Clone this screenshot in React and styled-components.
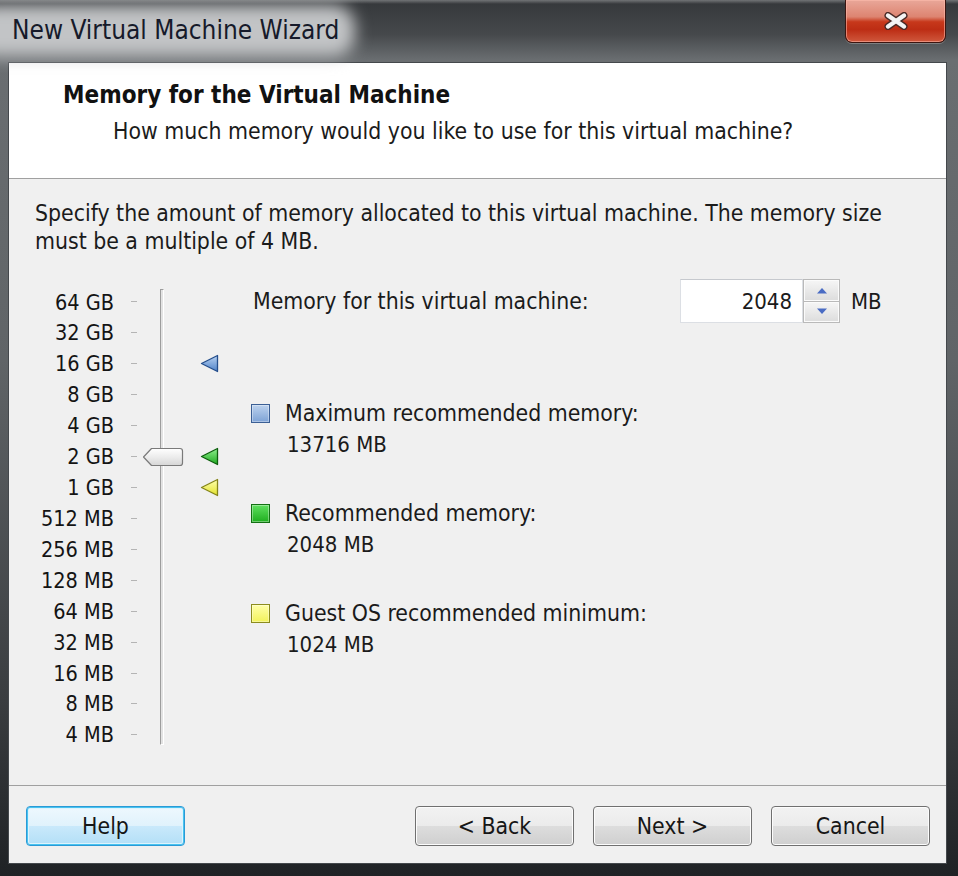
import React from "react";
import styled, { createGlobalStyle } from "styled-components";

const Global = createGlobalStyle`
  html, body { margin: 0; padding: 0; background: #2a2d30; }
  body { width: 958px; height: 876px; overflow: hidden; }
  * { box-sizing: border-box; }
`;

const FONT = `"DejaVu Sans Condensed", "DejaVu Sans", "Liberation Sans", sans-serif`;

const Window = styled.div`
  width: 958px;
  height: 876px;
  display: flex;
  flex-direction: column;
  font-family: ${FONT};
  font-size: 22.8px;
  color: #1b1b1b;
  overflow: hidden;
  background: linear-gradient(
    180deg,
    #34373a 0px,
    #45484b 34px,
    #6a6e71 60px,
    #606467 360px,
    #3a3d40 700px,
    #1f2225 876px
  );
`;

const TitleBar = styled.div`
  height: 62px;
  flex: none;
  display: flex;
  align-items: flex-start;
  justify-content: space-between;
  isolation: isolate;
  background: linear-gradient(180deg, rgba(255,255,255,0.3) 0px, rgba(255,255,255,0) 4px);
`;

const Title = styled.div`
  position: relative;
  font-size: 26px;
  line-height: 28px;
  margin: 16px 0 0 12px;
  color: #161a2a;
  &::before {
    content: "";
    position: absolute;
    inset: -11px -16px -13px -40px;
    background: #c2c4c6;
    border-radius: 22px;
    filter: blur(8px);
    z-index: -1;
  }
`;

const CloseButton = styled.div`
  width: 101px;
  height: 43px;
  margin-right: 12px;
  border: 1px solid #3b1510;
  border-top: none;
  border-radius: 0 0 7px 7px;
  display: flex;
  align-items: center;
  justify-content: center;
  box-shadow: inset 0 0 0 1px rgba(255, 190, 175, 0.55), 0 1px 0 rgba(255,255,255,0.25);
  background: linear-gradient(
    180deg,
    #e9a799 0%,
    #dd8471 40%,
    #c7381b 52%,
    #bd2d14 70%,
    #d0583d 100%
  );
`;

const Client = styled.div`
  flex: 1;
  margin: 0 11px 12px 8px;
  border: 1px solid #44484c;
  background: #f0f0f0;
  display: flex;
  flex-direction: column;
  min-height: 0;
`;

const Header = styled.div`
  height: 116px;
  flex: none;
  background: #ffffff;
  border-bottom: 1px solid #a0a0a0;
  padding: 18px 0 0 54px;
`;

const HeaderTitle = styled.div`
  font-weight: bold;
  font-size: 24px;
  line-height: 28px;
  color: #111;
`;

const HeaderSub = styled.div`
  line-height: 28px;
  margin: 8px 0 0 50px;
`;

const Body = styled.div`
  flex: 1;
  padding: 20px 0 0 26px;
  display: flex;
  flex-direction: column;
`;

const Intro = styled.div`
  line-height: 28px;
  white-space: nowrap;
`;

const Middle = styled.div`
  display: flex;
  margin-top: 24px;
`;

const Scale = styled.div`
  display: grid;
  grid-template-columns: 79px 30px 36px 73px;
  grid-template-rows: repeat(15, 30.93px);
  padding-top: 7.5px;
`;

const ScaleLabel = styled.div`
  grid-column: 1;
  grid-row: ${(p) => p.$row};
  text-align: right;
  font-size: 21.5px;
  line-height: 30.93px;
  padding-top: 1px;
  white-space: nowrap;
  color: #141414;
`;

const Tick = styled.div`
  grid-column: 2;
  grid-row: ${(p) => p.$row};
  align-self: center;
  margin-left: 17px;
  width: 6px;
  height: 1px;
  background: #b4b4b4;
`;

const Track = styled.div`
  grid-column: 3;
  grid-row: 1 / -1;
  justify-self: center;
  width: 4px;
  margin: 2px 0 5px 0;
  border-left: 1px solid #9c9c9c;
  border-top: 1px solid #9c9c9c;
  border-right: 1px solid #ffffff;
  border-bottom: 1px solid #ffffff;
  background: #e2e2e2;
`;

const Thumb = styled.svg`
  grid-column: 3;
  grid-row: ${(p) => p.$row};
  align-self: center;
  justify-self: center;
  margin-left: 1px;
  z-index: 1;
`;

const Marker = styled.svg`
  grid-column: 4;
  grid-row: ${(p) => p.$row};
  align-self: center;
  margin-left: 20px;
`;

const Details = styled.div`
  width: 632px;
  display: flex;
  flex-direction: column;
`;

const SpinRow = styled.div`
  height: 44px;
  display: flex;
  align-items: center;
`;

const SpinLabel = styled.div`
  flex: 1;
`;

const SpinInput = styled.div`
  width: 123px;
  height: 44px;
  background: #ffffff;
  border: 1px solid #dcdfe4;
  border-top-color: #c6c9ce;
  padding-right: 10px;
  font-size: 22px;
  display: flex;
  align-items: center;
  justify-content: flex-end;
`;

const SpinButtons = styled.div`
  width: 37px;
  height: 44px;
  display: flex;
  flex-direction: column;
`;

const SpinBtn = styled.div`
  flex: 1;
  border: 1px solid #b9b9b9;
  ${(p) => (p.$down ? "border-top: none;" : "")}
  background: linear-gradient(180deg, #f6f6f6 0%, #e9e9e9 50%, #dcdcdc 100%);
  box-shadow: inset 0 0 0 1px #fbfbfb;
  display: flex;
  align-items: center;
  justify-content: center;
`;

const Unit = styled.div`
  margin-left: 11px;
  width: 34px;
  font-size: 22px;
`;

const Legend = styled.div`
  margin-top: 75px;
  display: flex;
  flex-direction: column;
  gap: 38px;
`;

const LegendItem = styled.div`
  display: grid;
  grid-template-columns: 32px auto;
  line-height: 31px;
  white-space: nowrap;
`;

const Swatch = styled.div`
  width: 19px;
  height: 19px;
  margin: 6px 0 0 -2px;
  border: 1px solid ${(p) => p.$border};
  background: ${(p) => p.$fill};
  box-shadow: inset 0 0 0 1px rgba(255, 255, 255, 0.35);
`;

const LegendValue = styled.div`
  grid-column: 2;
  margin-left: 2px;
  font-size: 22px;
`;

const Footer = styled.div`
  height: 78px;
  flex: none;
  border-top: 1px solid #a0a0a0;
  padding: 20px 16px 0 17px;
  display: flex;
  gap: 19px;
`;

const Button = styled.div`
  width: 159px;
  height: 40px;
  border-radius: 4px;
  display: flex;
  align-items: center;
  justify-content: center;
  color: #161616;
  border: 1px solid ${(p) => (p.$focus ? "#2b9ad6" : "#707070")};
  box-shadow: ${(p) =>
    p.$focus
      ? "inset 0 0 0 1px #48c3f0, inset 0 0 0 2px #ddf3fd"
      : "inset 0 0 0 1px #fcfcfc"};
  background: ${(p) =>
    p.$focus
      ? "linear-gradient(180deg, #eef8fe 0%, #e0f2fc 50%, #c9e9fb 51%, #b3dff7 100%)"
      : "linear-gradient(180deg, #f2f2f2 0%, #ebebeb 50%, #dddddd 51%, #cfcfcf 100%)"};
`;

const Spacer = styled.div`
  flex: 1;
`;

const labels = [
  "64 GB", "32 GB", "16 GB", "8 GB", "4 GB", "2 GB", "1 GB",
  "512 MB", "256 MB", "128 MB", "64 MB", "32 MB", "16 MB", "8 MB", "4 MB",
];

const markerColors = {
  blue: { a: "#b8d2f2", b: "#4f82c8", s: "#244e8c" },
  green: { a: "#8ef08e", b: "#1ea81e", s: "#0d5f0d" },
  yellow: { a: "#ffffb0", b: "#e2e22a", s: "#85851a" },
};

function Tri({ row, color }) {
  const c = markerColors[color];
  const id = `tri-${color}`;
  return (
    <Marker $row={row} width="20" height="19" viewBox="0 0 20 19">
      <defs>
        <linearGradient id={id} x1="0" y1="0" x2="0" y2="1">
          <stop offset="0" stopColor={c.a} />
          <stop offset="1" stopColor={c.b} />
        </linearGradient>
      </defs>
      <path d="M1.5 9.5 L17.5 1.5 V17.5 Z" fill={`url(#${id})`} stroke={c.s} strokeWidth="1.3" strokeLinejoin="round" />
    </Marker>
  );
}

export default function App() {
  return (
    <>
      <Global />
      <Window>
        <TitleBar>
          <Title>New Virtual Machine Wizard</Title>
          <CloseButton>
            <svg width="28" height="18" viewBox="0 0 28 18">
              <path d="M6 3.5 L22 14.5 M22 3.5 L6 14.5" stroke="#4a2a26" strokeWidth="7" strokeLinecap="round" />
              <path d="M6 3.5 L22 14.5 M22 3.5 L6 14.5" stroke="#f4f4f4" strokeWidth="4.4" strokeLinecap="round" />
            </svg>
          </CloseButton>
        </TitleBar>
        <Client>
          <Header>
            <HeaderTitle>Memory for the Virtual Machine</HeaderTitle>
            <HeaderSub>How much memory would you like to use for this virtual machine?</HeaderSub>
          </Header>
          <Body>
            <Intro>
              Specify the amount of memory allocated to this virtual machine. The memory size
              <br />
              must be a multiple of 4 MB.
            </Intro>
            <Middle>
              <Scale>
                {labels.map((l, i) => (
                  <React.Fragment key={l}>
                    <ScaleLabel $row={i + 1}>{l}</ScaleLabel>
                    <Tick $row={i + 1} />
                  </React.Fragment>
                ))}
                <Track />
                <Thumb $row={6} width="42" height="22" viewBox="0 0 42 22">
                  <defs>
                    <linearGradient id="thumbg" x1="0" y1="0" x2="0" y2="1">
                      <stop offset="0" stopColor="#ffffff" />
                      <stop offset="0.5" stopColor="#ececec" />
                      <stop offset="1" stopColor="#d6d6d6" />
                    </linearGradient>
                  </defs>
                  <path d="M1.5 11 L9.5 2.5 H38 Q40.5 2.5 40.5 5 V17 Q40.5 19.5 38 19.5 H9.5 Z" fill="url(#thumbg)" stroke="#7a7a7a" strokeWidth="1.2" strokeLinejoin="round" />
                </Thumb>
                <Tri row={3} color="blue" />
                <Tri row={6} color="green" />
                <Tri row={7} color="yellow" />
              </Scale>
              <Details>
                <SpinRow>
                  <SpinLabel>Memory for this virtual machine:</SpinLabel>
                  <SpinInput>2048</SpinInput>
                  <SpinButtons>
                    <SpinBtn>
                      <svg width="12" height="7" viewBox="0 0 12 7">
                        <path d="M1 6.5 L6 1 L11 6.5 Z" fill="#4a6cc4" />
                      </svg>
                    </SpinBtn>
                    <SpinBtn $down>
                      <svg width="12" height="7" viewBox="0 0 12 7">
                        <path d="M1 0.5 L6 6 L11 0.5 Z" fill="#4a6cc4" />
                      </svg>
                    </SpinBtn>
                  </SpinButtons>
                  <Unit>MB</Unit>
                </SpinRow>
                <Legend>
                  <LegendItem>
                    <Swatch $border="#3b5f95" $fill="linear-gradient(180deg,#bcd2ee,#7ea3d6)" />
                    <div>Maximum recommended memory:</div>
                    <LegendValue>13716 MB</LegendValue>
                  </LegendItem>
                  <LegendItem>
                    <Swatch $border="#137013" $fill="linear-gradient(180deg,#5fe05f,#1fae1f)" />
                    <div>Recommended memory:</div>
                    <LegendValue>2048 MB</LegendValue>
                  </LegendItem>
                  <LegendItem>
                    <Swatch $border="#8c8c1e" $fill="linear-gradient(180deg,#ffffa8,#f2f25a)" />
                    <div>Guest OS recommended minimum:</div>
                    <LegendValue>1024 MB</LegendValue>
                  </LegendItem>
                </Legend>
              </Details>
            </Middle>
          </Body>
          <Footer>
            <Button $focus>Help</Button>
            <Spacer />
            <Button>&lt; Back</Button>
            <Button>Next &gt;</Button>
            <Button>Cancel</Button>
          </Footer>
        </Client>
      </Window>
    </>
  );
}
